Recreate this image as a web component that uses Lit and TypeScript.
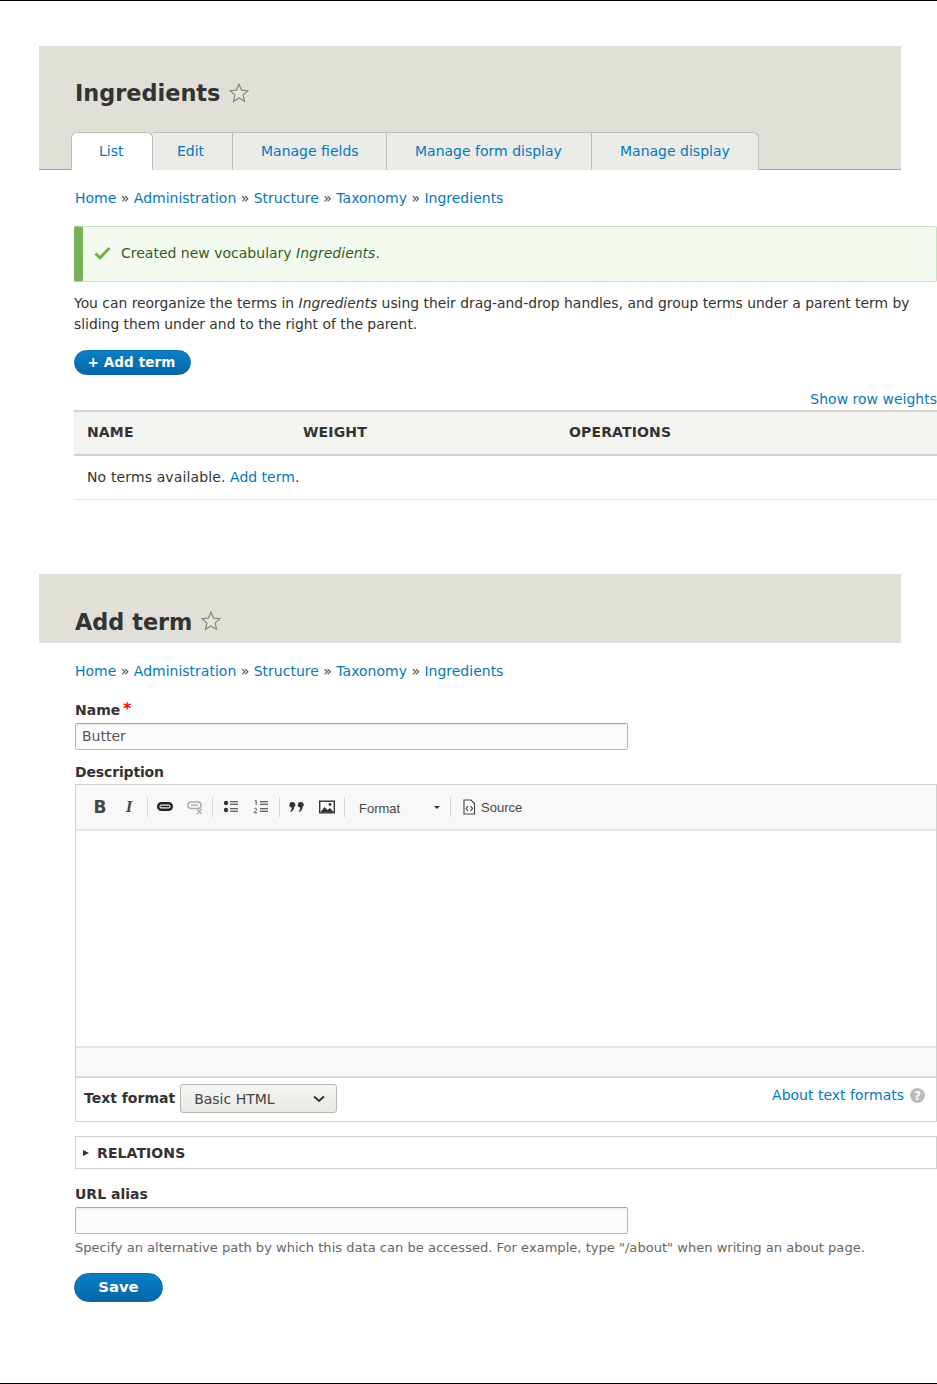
import { LitElement, html, css } from "lit";
import { customElement } from "lit/decorators.js";

const star = html`<svg class="star" viewBox="0 0 20 20" width="20" height="20"><path d="M10 1.2l2.5 5.9 6.4.6-4.8 4.2 1.4 6.3L10 15l-5.5 3.2 1.4-6.3L1.1 7.7l6.4-.6z" fill="#e6e6df" stroke="#85857a" stroke-width="1.2"/></svg>`;

const crumbs = html`<nav class="crumbs"><a>Home</a> » <a>Administration</a> » <a>Structure</a> » <a>Taxonomy</a> » <a>Ingredients</a></nav>`;

@customElement("app-root")
export class AppRoot extends LitElement {
  static styles = css`
    :host { display: block; width: 937px; height: 1384px; overflow: hidden; background: #fff; position: relative;
      font-family: "DejaVu Sans", sans-serif; font-size: 14px; color: #333; }
    * { box-sizing: border-box; }
    a { color: #0678be; text-decoration: none; }
    .rule { height: 1px; background: #000; }
    .rule.top { margin-bottom: 45px; }
    .head { margin-left: 39px; width: 862px; background: #e0e0d8; padding: 0 0 0 36px; }
    .head.one { height: 124px; border-bottom: 1px solid #a6a6a0; padding-top: 30px; }
    .head.two { height: 69px; padding-top: 31px; margin-top: 74px; }
    .title { display: flex; align-items: center; gap: 9px; height: 34px; }
    h1 { margin: 0; font-size: 22.4px; font-weight: 700; line-height: 34px; color: #333; }
    .star { display: block; margin-top: -1px; }
    .head.two .star { margin-top: -3px; }
    .tabs { display: flex; margin-left: -4px; margin-top: 22px; height: 38px; }
    .tab { height: 38px; padding: 0 0 0 28px; line-height: 37px; background: #ebebe7; border: 1px solid #bfbfba; border-left: 0; border-bottom: 0; white-space: nowrap; }
    .tab:last-child { border-top-right-radius: 6px; }
    .tab.active { background: #fff; border-left: 1px solid #bfbfba; border-top-left-radius: 6px; border-top-right-radius: 6px; }
    .tab.t1 { width: 82px; padding-left: 27px; } .tab.t2 { width: 80px; padding-left: 24px; } .t3 { width: 154px; } .t4 { width: 205px; } .t5 { width: 167px; }
    .body { padding-left: 75px; }
    .crumbs { height: 20px; line-height: 20px; margin-top: 18px; color: #444; white-space: nowrap; }
    .msg { margin: 18px 0 0 -1px; height: 56px; border: 1px solid #c9e1bd; border-left: 9px solid #77b259; border-radius: 2px; background: #f3faef; color: #325e1c; display: flex; align-items: center; padding: 0 0 2px 11px; gap: 10px; }
    .para { margin: 11px 0 0 -1px; font-size: 13.88px; line-height: 21px; color: #333; width: 863px; }
    .btn { align-items: center; justify-content: center; border-radius: 20px; background: linear-gradient(#0c7fc4, #0467a8); border: 1px solid #0a6cae; color: #fff; font-weight: 700; display: flex; margin-left: -1px; }
    .btn.add { width: 117px; height: 25px; margin-top: 15px; padding: 0 2px 1px 0; font-size: 13.5px; letter-spacing: 0.1px; }
    .btn.save { width: 89px; height: 29px; margin-top: 15px; padding-bottom: 2px; font-size: 14.8px; }
    .weights { text-align: right; margin-top: 14px; height: 20px; line-height: 20px; }
    .thead { display: grid; grid-template-columns: 216px 266px 1fr; height: 46px; padding: 0 0 2px 13px; margin: 1px 0 0 -1px; align-items: center; background: #f4f4f0; border-top: 2px solid #d4d4ce; border-bottom: 2px solid #d4d4ce; font-weight: 700; color: #333; letter-spacing: 0.15px; }
    .trow { height: 44px; margin-left: -1px; padding: 0 0 1px 13px; border-bottom: 1px solid #e6e6e2; display: flex; align-items: center; color: #333; }
    .trow .none { letter-spacing: .13px; }
    .label { font-weight: 700; line-height: 20px; height: 20px; }
    .req { color: #e00; font-size: 15px; position: relative; top: -1px; margin-left: 3px; }
    .input { width: 553px; height: 27px; margin-top: 3px; border: 1px solid #b8b8b0; border-top-color: #a5a59e; border-radius: 2px; background: #fcfcfa; box-shadow: inset 0 1px 2px rgba(0,0,0,.08); padding: 0 6px; line-height: 25px; color: #555; }
    .name-label { margin-top: 19px; }
    .desc-label { margin-top: 12px; letter-spacing: -.15px; }
    .editor { margin-top: 2px; border: 1px solid #d1d1d1; height: 294px; display: flex; flex-direction: column; background: #fff; }
    .bar { height: 46px; background: #f8f8f8; border-bottom: 2px solid #e4e4e4; display: flex; align-items: center; padding-left: 16px; flex: none; color: #474747; font-family: "Liberation Sans", sans-serif; }
    .bar .ic { width: 16px; height: 16px; display: block; flex: none; }
    .sep { width: 1px; height: 20px; background: #d4d4d4; flex: none; }
    .b { font-weight: 700; font-size: 17px; width: 16px; text-align: center; line-height: 16px; font-family: "DejaVu Sans", sans-serif; }
    .i { font-weight: 700; font-style: italic; font-size: 17px; width: 16px; margin-left: 13px; text-align: center; line-height: 16px; font-family: "Liberation Serif", serif; }
    .s1 { margin-left: 10px; } .s2 { margin-left: 9px; }
    .ml9 { margin-left: 9px; } .ml10 { margin-left: 10px; } .ml14 { margin-left: 14px; }
    .format { margin-left: 14px; font-size: 13px; width: 75px; position: relative; top: 1px; }
    .caret { width: 0; height: 0; border-left: 3px solid transparent; border-right: 3px solid transparent; border-top: 3px solid #333; }
    .source { margin-left: 4px; font-size: 13px; }
    .area { flex: 1; }
    .path { height: 31px; flex: none; background: #f8f8f8; border-top: 2px solid #e4e4e4; border-bottom: 1px solid #e4e4e4; }
    .fmt { border: 1px solid #d1d1d1; border-top: 0; height: 44px; display: flex; align-items: flex-start; padding-left: 8px; }
    .fmt .lbl { font-weight: 700; line-height: 20px; margin-top: 10px; }
    .select { width: 157px; height: 29px; margin: 6px 0 0 5px; border: 1px solid #b8b8b0; border-radius: 3px; background: linear-gradient(#f6f6f3, #e8e8e4); display: flex; align-items: center; justify-content: space-between; padding: 0 11px 0 13px; color: #444; }
    .about { margin-left: auto; margin-top: 7px; margin-right: 11px; display: flex; gap: 6px; align-items: center; line-height: 20px; }
    .rel { margin-top: 14px; height: 33px; border: 1px solid #d1d1d1; display: flex; align-items: center; padding-left: 7px; gap: 8px; font-weight: 700; letter-spacing: 0.1px; }
    .tri { width: 0; height: 0; border-left: 6px solid #333; border-top: 3.5px solid transparent; border-bottom: 3.5px solid transparent; }
    .url-label { margin-top: 15px; }
    .hint { margin-top: 4px; font-size: 13.07px; line-height: 20px; color: #666; white-space: nowrap; }
    .rule.bottom { position: absolute; left: 0; right: 0; bottom: 0; }
  `;

  render() {
    return html`
      <div class="rule top"></div>
      <header class="head one">
        <div class="title"><h1>Ingredients</h1>${star}</div>
        <div class="tabs">
          <a class="tab t1 active">List</a><a class="tab t2">Edit</a><a class="tab t3">Manage fields</a><a class="tab t4">Manage form display</a><a class="tab t5">Manage display</a>
        </div>
      </header>
      <main class="body">
        ${crumbs}
        <div class="msg">
          <svg width="17" height="14" viewBox="0 0 17 14"><path d="M1.500 7.500l4.500 4.300L15.500 2" fill="none" stroke="#6eb23f" stroke-width="3"/></svg>
          <span>Created new vocabulary <em>Ingredients</em>.</span>
        </div>
        <p class="para">You can reorganize the terms in <em>Ingredients</em> using their drag-and-drop handles, and group terms under a parent term by sliding them under and to the right of the parent.</p>
        <a class="btn add">+ Add term</a>
        <div class="weights"><a>Show row weights</a></div>
        <div class="thead"><span>NAME</span><span>WEIGHT</span><span>OPERATIONS</span></div>
        <div class="trow"><span><span class="none">No terms available.</span> <a>Add term</a>.</span></div>
      </main>
      <header class="head two"><div class="title"><h1>Add term</h1>${star}</div></header>
      <main class="body">
        ${crumbs}
        <div class="label name-label">Name<span class="req">*</span></div>
        <div class="input">Butter</div>
        <div class="label desc-label">Description</div>
        <div class="editor">
          <div class="bar">
            <span class="b">B</span>
            <span class="i">I</span>
            <span class="sep s1"></span>
            <svg class="ic ml9" viewBox="0 0 16 16"><rect x="1.200" y="4.200" width="13.600" height="6.600" rx="3.300" fill="none" stroke="#222" stroke-width="2.400"/><path d="M3.500 7.500h9" stroke="#222" stroke-width="1.600"/></svg>
            <svg class="ic ml14" viewBox="0 0 16 16"><rect x="1" y="3" width="13" height="6.500" rx="3" fill="none" stroke="#b0b0b0" stroke-width="1.600"/><path d="M4 6.300h7" stroke="#b0b0b0" stroke-width="1.400"/><path d="M10 10l4.500 5M14.500 10L10 15" stroke="#b0b0b0" stroke-width="1.500"/></svg>
            <span class="sep s2"></span>
            <svg class="ic ml10" viewBox="0 0 16 16"><circle cx="3" cy="4" r="2.200" fill="#333"/><circle cx="3" cy="11" r="2.200" fill="#333"/><path d="M7 2.800h8M7 5.200h8M7 9.800h8M7 12.200h8" stroke="#333" stroke-width="1.100"/></svg>
            <svg class="ic ml14" viewBox="0 0 16 16"><path d="M1.800 2l1.400-.6V6M1.200 10c.6-1.100 2.600-.9 2.600.4 0 1.300-2.600 1.800-2.600 3.400h2.800" fill="none" stroke="#333" stroke-width=".8"/><path d="M7 2.800h8M7 5.200h8M7 9.800h8M7 12.200h8" stroke="#333" stroke-width="1.100"/></svg>
            <span class="sep s1"></span>
            <svg class="ic ml9" viewBox="0 0 16 16"><path d="M3.600 3a2.800 2.800 0 0 1 1.600 5.100c-.1 2-1.200 3.700-2.900 5l-.9-.8c.9-1 1.300-1.900 1.400-3.700A2.800 2.800 0 0 1 3.600 3zM12 3a2.800 2.800 0 0 1 1.600 5.100c-.1 2-1.200 3.700-2.900 5l-.9-.8c.9-1 1.300-1.900 1.400-3.700A2.800 2.800 0 0 1 12 3z" fill="#333"/></svg>
            <svg class="ic ml14" viewBox="0 0 16 16"><rect x=".7" y="2.200" width="14.600" height="11.600" fill="#fff" stroke="#333" stroke-width="1.400"/><path d="M1.500 13l4-5 3 3 2.500-2 3.500 4z" fill="#333"/><circle cx="11" cy="5.500" r="1.400" fill="#333"/></svg>
            <span class="sep s2"></span>
            <span class="format">Format</span>
            <span class="caret"></span>
            <span class="sep s1"></span>
            <svg class="ic ml10" viewBox="0 0 16 16"><path d="M3 1h7l3.500 3.500V15H3z" fill="#fff" stroke="#444" stroke-width="1.100"/><path d="M7 7L5 9.500 7 12M9.500 7l2 2.500-2 2.500" fill="none" stroke="#333" stroke-width="1.100"/></svg>
            <span class="source">Source</span>
          </div>
          <div class="area"></div>
          <div class="path"></div>
        </div>
        <div class="fmt">
          <span class="lbl">Text format</span>
          <div class="select"><span>Basic HTML</span><svg width="12" height="8" viewBox="0 0 12 8"><path d="M1 1.500l5 4.500 5-4.500" fill="none" stroke="#333" stroke-width="2"/></svg></div>
          <div class="about"><a>About text formats</a><svg width="15" height="15" viewBox="0 0 15 15"><circle cx="7.500" cy="7.500" r="7.500" fill="#bcbcbc"/><text x="7.500" y="12" text-anchor="middle" font-size="12" font-weight="700" fill="#fff" font-family="DejaVu Sans">?</text></svg></div>
        </div>
        <div class="rel"><span class="tri"></span>RELATIONS</div>
        <div class="label url-label">URL alias</div>
        <div class="input"></div>
        <div class="hint">Specify an alternative path by which this data can be accessed. For example, type "/about" when writing an about page.</div>
        <a class="btn save">Save</a>
      </main>
      <div class="rule bottom"></div>
    `;
  }
}
